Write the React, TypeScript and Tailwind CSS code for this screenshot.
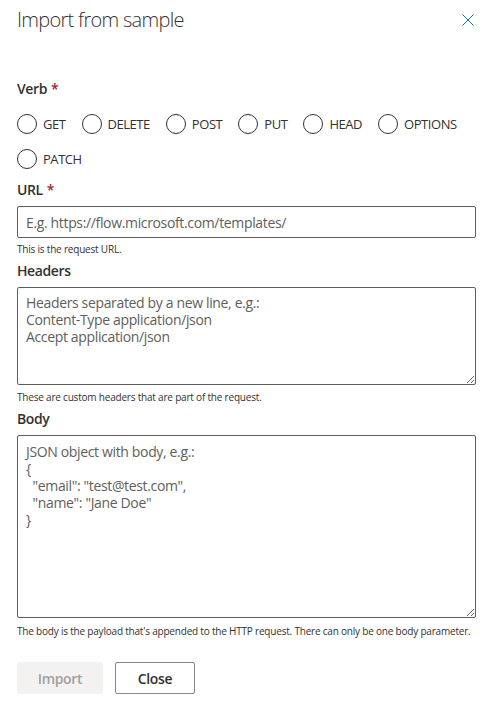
import React from 'react';

const font = { fontFamily: '"Segoe UI", "Open Sans", sans-serif' };

function Radio({ label }: { label: string }) {
  return (
    <label className="flex items-center h-[20px] cursor-pointer">
      <span className="w-[20px] h-[20px] rounded-full border border-[#323130] bg-white shrink-0" />
      <span className="ml-[6px] text-[13px] tracking-[-0.45px] text-[#323130] leading-[20px]">{label}</span>
    </label>
  );
}

function FieldLabel({ children, required }: { children: React.ReactNode; required?: boolean }) {
  return (
    <div className="text-[14px] leading-[20px] font-semibold tracking-[-0.4px] text-[#323130]">
      {children}
      {required && <span className="text-[#a4262c] ml-[4px]">*</span>}
    </div>
  );
}

export default function App() {
  return (
    <div style={font} className="w-[491px] h-[707px] bg-white pl-[17px] pr-[15px] pt-[6px] overflow-hidden">
      <div className="flex items-center justify-between h-[28px]">
        <h1 className="text-[20px] leading-[28px] font-light tracking-[-0.7px] text-[#323130]">Import from sample</h1>
        <button className="mr-[2px] text-[#0078d4]" title="Close">
          <svg width="12" height="12" viewBox="0 0 12 12" fill="none" stroke="currentColor" strokeWidth={1}>
            <path d="M0.5 0.5L11.5 11.5M11.5 0.5L0.5 11.5" />
          </svg>
        </button>
      </div>

      <div className="mt-[45px]">
        <FieldLabel required>Verb</FieldLabel>
      </div>
      <div className="mt-[15px] flex gap-x-[16px]">
        {['GET', 'DELETE', 'POST', 'PUT', 'HEAD', 'OPTIONS'].map((v) => (
          <Radio key={v} label={v} />
        ))}
      </div>
      <div className="mt-[15px] flex">
        <Radio label="PATCH" />
      </div>

      <div className="mt-[11px]">
        <FieldLabel required>URL</FieldLabel>
      </div>
      <input
        className="mt-[6px] block w-full h-[32px] border border-[#605e5c] rounded-[2px] px-[8px] text-[14px] tracking-[-0.35px] text-[#323130] placeholder:text-[#605e5c] outline-none"
        placeholder="E.g. https://flow.microsoft.com/templates/"
      />
      <p className="mt-[4px] text-[10px] leading-[14px] tracking-[-0.2px] text-[#323130] whitespace-nowrap">This is the request URL.</p>

      <div className="mt-[5px]">
        <FieldLabel>Headers</FieldLabel>
      </div>
      <textarea
        className="mt-[6px] block w-full h-[98px] border border-[#605e5c] rounded-[2px] px-[8px] pt-[6px] text-[14px] leading-[17px] tracking-[-0.35px] text-[#323130] placeholder:text-[#605e5c] outline-none"
        placeholder={'Headers separated by a new line, e.g.:\nContent-Type application/json\nAccept application/json'}
      />
      <p className="mt-[5px] text-[10px] leading-[14px] tracking-[-0.2px] text-[#323130] whitespace-nowrap">These are custom headers that are part of the request.</p>

      <div className="mt-[5px]">
        <FieldLabel>Body</FieldLabel>
      </div>
      <textarea
        className="mt-[6px] block w-full h-[183px] border border-[#605e5c] rounded-[2px] px-[8px] pt-[7px] text-[14px] leading-[17px] tracking-[-0.35px] text-[#323130] placeholder:text-[#605e5c] outline-none"
        placeholder={'JSON object with body, e.g.:\n{\n  "email": "test@test.com",\n  "name": "Jane Doe"\n}'}
      />
      <p className="mt-[6px] text-[10px] leading-[14px] tracking-[-0.2px] text-[#323130] whitespace-nowrap">
        The body is the payload that's appended to the HTTP request. There can only be one body parameter.
      </p>

      <div className="mt-[24px] flex gap-[12px]">
        <button disabled className="w-[86px] h-[32px] rounded-[2px] bg-[#f3f2f1] text-[#a19f9d] text-[14px] font-semibold tracking-[-0.3px]">
          Import
        </button>
        <button className="w-[80px] h-[32px] rounded-[2px] border border-[#8a8886] bg-white text-[#323130] text-[14px] font-semibold tracking-[-0.3px]">
          Close
        </button>
      </div>
    </div>
  );
}
